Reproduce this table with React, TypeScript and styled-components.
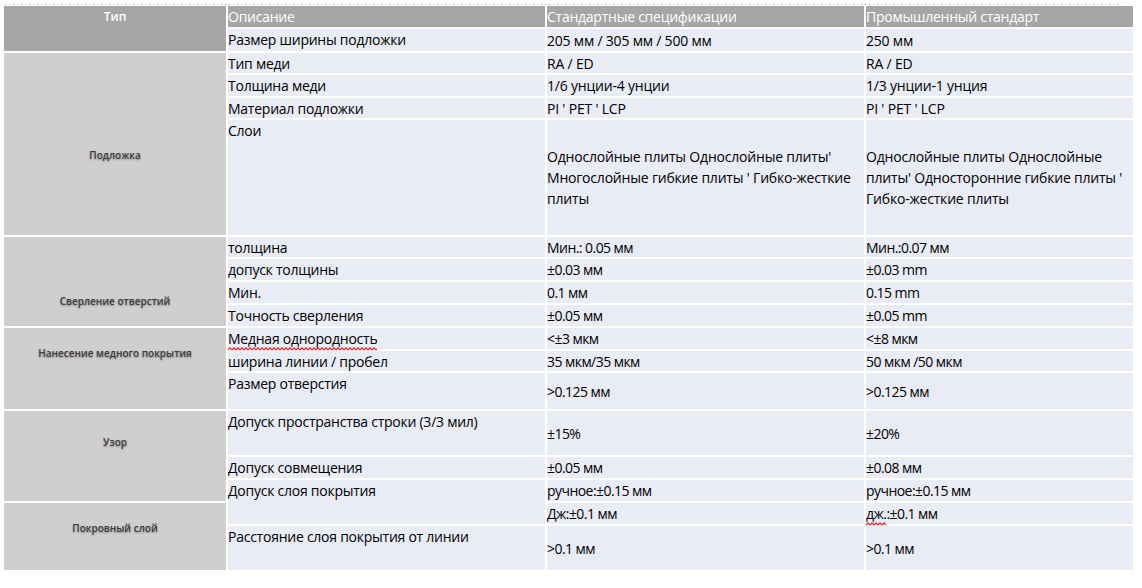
import React from "react";
import styled, { createGlobalStyle, css } from "styled-components";

const GlobalStyle = createGlobalStyle`
  html, body { margin: 0; padding: 0; background: #ffffff; }
  body { font-family: "Open Sans", "Noto Sans", "DejaVu Sans", sans-serif; color: #000; }
`;

const Page = styled.div`
  width: 1142px;
  height: 588px;
  padding: 4px 0 0 4px;
  box-sizing: border-box;
  overflow: hidden;
`;

const DottedRule = styled.div`
  margin-left: 1px;
  width: 1116px;
  height: 1px;
  background-image: repeating-linear-gradient(to right, #a2a2a2 0 1px, transparent 1px 4px);
`;

const Table = styled.div`
  margin-top: 1px;
  display: grid;
  grid-template-columns: 222px 317px 317px 267px;
  grid-template-rows: 21px 22px 20px 21px 20px 115px 20px 21px 21px 21px 21px 20px 36px 44px 21px 21px 21px 44px;
  column-gap: 2px;
  row-gap: 2px;
`;

type Kind = "head" | "headGroup" | "group" | "label" | "value";

const Cell = styled.div<{ $col: number; $row: number; $span?: number; $kind: Kind; $offset?: number; $narrow?: boolean }>`
  grid-column: ${(p) => p.$col};
  grid-row: ${(p) => p.$row} / span ${(p) => p.$span ?? 1};
  display: flex;
  box-sizing: border-box;
  white-space: pre-line;
  ${(p) => {
    switch (p.$kind) {
      case "headGroup":
        return css`
          background: #a6a6a6;
          color: #ffffff;
          justify-content: center;
          align-items: flex-start;
          padding-top: 3px;
          font-size: 12px;
          font-weight: 600;
          line-height: 16px;
        `;
      case "head":
        return css`
          background: #a6a6a6;
          color: #ffffff;
          align-items: center;
          font-size: 14px;
          letter-spacing: -0.25px;
          line-height: 20px;
        `;
      case "group":
        return css`
          background: #d0cece;
          color: #404040;
          justify-content: center;
          align-items: flex-start;
          padding-top: ${(p.$offset ?? 0) - 7}px;
          font-size: 10px;
          font-weight: 600;
          line-height: 14px;
          text-shadow: 0 1px 2px rgba(0, 0, 0, 0.35);
        `;
      case "label":
        return css`
          background: #e9ebf5;
          align-items: flex-start;
          padding-top: 1px;
          font-size: 14px;
          letter-spacing: -0.25px;
          line-height: 20px;
        `;
      default:
        return css`
          background: #e9ebf5;
          align-items: center;
          font-size: 14px;
          font-stretch: ${p.$narrow ? "88%" : "100%"};
          letter-spacing: ${p.$narrow ? "-0.55px" : "-0.2px"};
          line-height: 21px;
        `;
    }
  }}
`;

const Squiggle = styled.span`
  position: relative;
  display: inline-block;
`;

const Wave = styled.svg`
  position: absolute;
  left: 0;
  bottom: -2px;
  width: 100%;
  height: 4px;
  overflow: hidden;
`;

function Misspelled({ children, id }: { children: React.ReactNode; id: string }) {
  return (
    <Squiggle>
      {children}
      <Wave aria-hidden="true">
        <defs>
          <pattern id={id} width="4" height="4" patternUnits="userSpaceOnUse">
            <path d="M0 3.2 L2 0.8 L4 3.2" fill="none" stroke="#e8202a" strokeWidth="1.1" />
          </pattern>
        </defs>
        <rect width="100%" height="4" fill={`url(#${id})`} />
      </Wave>
    </Squiggle>
  );
}

type Group = { text: string; row: number; span: number; offset: number };
const groups: Group[] = [
  { text: "Подложка", row: 3, span: 4, offset: 102 },
  { text: "Сверление отверстий", row: 7, span: 4, offset: 64 },
  { text: "Нанесение медного покрытия", row: 11, span: 3, offset: 25 },
  { text: "Узор", row: 14, span: 3, offset: 31 },
  { text: "Покровный слой", row: 17, span: 2, offset: 25 },
];

type Label = { text: React.ReactNode; row: number; span?: number };
const labels: Label[] = [
  { text: "Размер ширины подложки", row: 2 },
  { text: "Тип меди", row: 3 },
  { text: "Толщина меди", row: 4 },
  { text: "Материал подложки", row: 5 },
  { text: "Слои", row: 6 },
  { text: "толщина", row: 7 },
  { text: "допуск толщины", row: 8 },
  { text: "Мин.", row: 9 },
  { text: "Точность сверления", row: 10 },
  { text: <Misspelled id="sq1">Медная однородность</Misspelled>, row: 11 },
  { text: "ширина линии / пробел", row: 12 },
  { text: "Размер отверстия", row: 13 },
  { text: "Допуск пространства строки (3/3 мил)", row: 14 },
  { text: "Допуск совмещения", row: 15 },
  { text: "Допуск слоя покрытия", row: 16, span: 2 },
  { text: "Расстояние слоя покрытия от линии", row: 18 },
];

type Value = { std: React.ReactNode; ind: React.ReactNode; row: number };
const values: Value[] = [
  { row: 2, std: "205 мм / 305 мм / 500 мм", ind: "250 мм" },
  { row: 3, std: "RA / ED", ind: "RA / ED" },
  { row: 4, std: "1/6 унции-4 унции", ind: "1/3 унции-1 унция" },
  { row: 5, std: "PI ' PET ' LCP", ind: "PI ' PET ' LCP" },
  {
    row: 6,
    std: "Однослойные плиты Однослойные плиты'\nМногослойные гибкие плиты ' Гибко-жесткие\nплиты",
    ind: "Однослойные плиты Однослойные\nплиты' Односторонние гибкие плиты '\nГибко-жесткие плиты",
  },
  { row: 7, std: "Мин.: 0.05 мм", ind: "Мин.:0.07 мм" },
  { row: 8, std: "±0.03 мм", ind: "±0.03 mm" },
  { row: 9, std: "0.1 мм", ind: "0.15 mm" },
  { row: 10, std: "±0.05 мм", ind: "±0.05 mm" },
  { row: 11, std: "<±3 мкм", ind: "<±8 мкм" },
  { row: 12, std: "35 мкм/35 мкм", ind: "50 мкм /50 мкм" },
  { row: 13, std: ">0.125 мм", ind: ">0.125 мм" },
  { row: 14, std: "±15%", ind: "±20%" },
  { row: 15, std: "±0.05 мм", ind: "±0.08 мм" },
  { row: 16, std: "ручное:±0.15 мм", ind: "ручное:±0.15 мм" },
  {
    row: 17,
    std: "Дж:±0.1 мм",
    ind: (
      <span>
        <Misspelled id="sq2">дж.</Misspelled>:±0.1 мм
      </span>
    ),
  },
  { row: 18, std: ">0.1 мм", ind: ">0.1 мм" },
];

export default function App() {
  return (
    <>
      <GlobalStyle />
      <Page>
        <DottedRule />
        <Table>
          <Cell $kind="headGroup" $col={1} $row={1} $span={2}>
            Тип
          </Cell>
          <Cell $kind="head" $col={2} $row={1}>
            Описание
          </Cell>
          <Cell $kind="head" $col={3} $row={1}>
            Стандартные спецификации
          </Cell>
          <Cell $kind="head" $col={4} $row={1}>
            Промышленный стандарт
          </Cell>

          {groups.map((g) => (
            <Cell key={g.text} $kind="group" $col={1} $row={g.row} $span={g.span} $offset={g.offset}>
              {g.text}
            </Cell>
          ))}

          {labels.map((l) => (
            <Cell key={`l${l.row}`} $kind="label" $col={2} $row={l.row} $span={l.span}>
              {l.text}
            </Cell>
          ))}

          {values.map((v) => (
            <React.Fragment key={`v${v.row}`}>
              <Cell $kind="value" $col={3} $row={v.row} $narrow={v.row >= 7}>
                {v.std}
              </Cell>
              <Cell $kind="value" $col={4} $row={v.row} $narrow={v.row >= 7}>
                {v.ind}
              </Cell>
            </React.Fragment>
          ))}
        </Table>
      </Page>
    </>
  );
}
